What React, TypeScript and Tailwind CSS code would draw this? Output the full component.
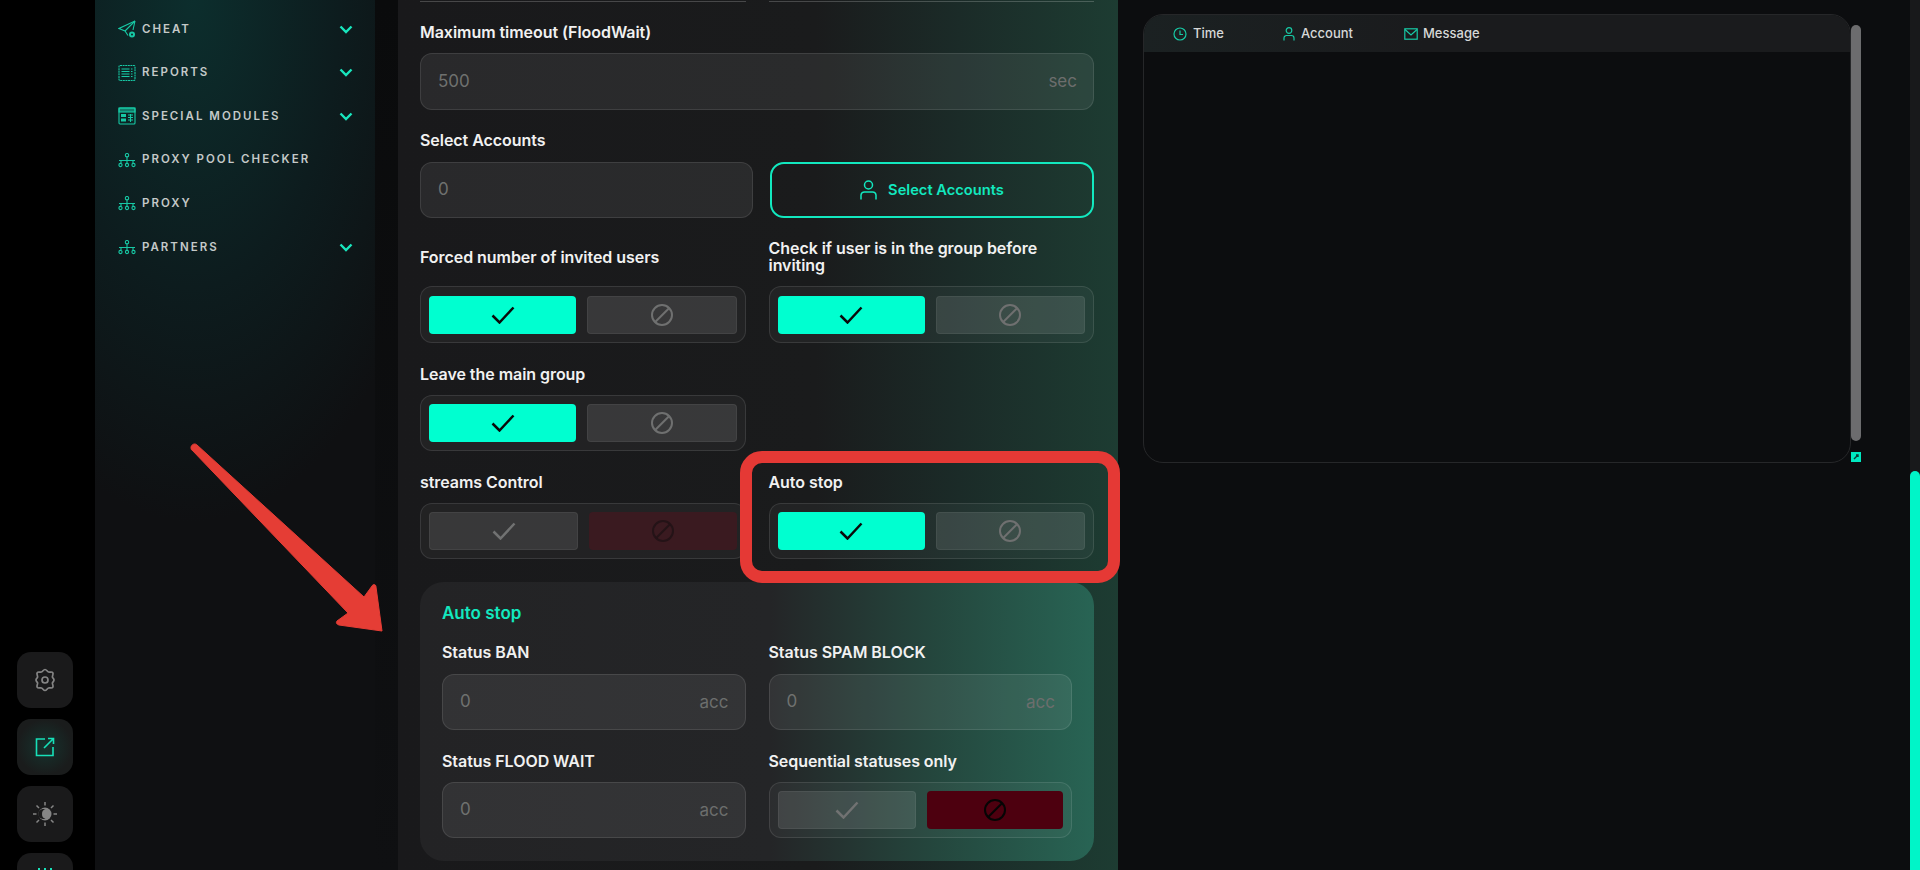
import React from 'react';

const font = { fontFamily: 'Inter, "Liberation Sans", sans-serif' };

function Ban({ color }: { color: string }) {
  return (
    <svg width="24" height="24" viewBox="0 0 24 24" fill="none" stroke={color} strokeWidth="2">
      <circle cx="12" cy="12" r="10" />
      <path d="M5.2 19 19 5.2" />
    </svg>
  );
}

function Check({ color }: { color: string }) {
  return (
    <svg width="24" height="18" viewBox="0 0 24 18" fill="none" stroke={color} strokeWidth="2.5">
      <path d="M1.5 9.5 8.5 16.5 22.5 1.5" />
    </svg>
  );
}

function Chevron() {
  return (
    <svg width="14" height="9" viewBox="0 0 14 9" fill="none" stroke="#19e6bd" strokeWidth="2.4" className="ml-auto">
      <path d="M1.5 1.5 7 7l5.5-5.5" />
    </svg>
  );
}

function NetworkIcon() {
  return (
    <svg width="18" height="15" viewBox="0 0 18 15" fill="none" stroke="#17c9a5" strokeWidth="1.1">
      <circle cx="9" cy="2.2" r="1.7" />
      <path d="M9 4v3M1 7.5h16M3 7.5v2.5M9 7.5v2.5M15 7.5v2.5" />
      <circle cx="2.5" cy="12" r="1.6" />
      <circle cx="9" cy="12" r="1.6" />
      <circle cx="15.5" cy="12" r="1.6" />
    </svg>
  );
}

function PlaneIcon() {
  return (
    <svg width="18" height="18" viewBox="0 0 18 18" fill="none" stroke="#17c9a5" strokeWidth="1.1">
      <path d="M17 1 1 8.5l6 2.5 3 4.5" />
      <path d="M17 1 7 11M17 1l-2 9" />
      <circle cx="14" cy="14.5" r="3" fill="#17c9a5" stroke="none" />
      <circle cx="14" cy="14.5" r="1" fill="#0d2424" stroke="none" />
    </svg>
  );
}

function ReportIcon() {
  return (
    <svg width="18" height="18" viewBox="0 0 18 18" fill="none" stroke="#17c9a5" strokeWidth="1.1">
      <rect x="1" y="1.5" width="16" height="15" rx="1" strokeDasharray="2 0.6" />
      <path d="M3.5 5h8M3.5 7.5h8M3.5 10h8M3.5 12.5h8M13 5h1.5M13 7.5h1.5M13 10h1.5M13 12.5h1.5" />
    </svg>
  );
}

function ModuleIcon() {
  return (
    <svg width="18" height="18" viewBox="0 0 18 18" fill="none" stroke="#17c9a5" strokeWidth="1.1">
      <rect x="1" y="1" width="16" height="16" rx="1" />
      <rect x="1" y="1" width="16" height="4" fill="#17c9a5" fillOpacity="0.55" />
      <rect x="3" y="7" width="5" height="3" fill="#17c9a5" stroke="none" />
      <rect x="3" y="11.5" width="5" height="3" fill="#17c9a5" stroke="none" />
      <path d="M10 8h5M10 10.5h5M10 13h5M12.5 7v8" />
    </svg>
  );
}

function NavItem({ icon, label, arrow }: { icon: React.ReactNode; label: string; arrow?: boolean }) {
  return (
    <div className="flex h-[43.6px] items-center">
      <div className="flex w-[24px] justify-start">{icon}</div>
      <span className="text-[11.5px] font-semibold tracking-[2px] text-[#c4c9c8]">{label}</span>
      {arrow && <Chevron />}
    </div>
  );
}

function RailButton({ children, glow }: { children: React.ReactNode; glow?: boolean }) {
  return (
    <div
      className={
        glow
          ? 'flex h-[56px] w-[56px] shrink-0 items-center justify-center rounded-[14px] bg-[radial-gradient(circle,#16332e_0%,#1a1c1c_70%)]'
          : 'flex h-[56px] w-[56px] shrink-0 items-center justify-center rounded-[14px] bg-[#1a1a1b]'
      }
    >
      {children}
    </div>
  );
}

function Label({ children }: { children: React.ReactNode }) {
  return <div className="h-5 text-[16px] leading-5 font-semibold tracking-[-0.05px] text-[#f1f1f1]">{children}</div>;
}

function Input({ value, unit }: { value: string; unit?: string }) {
  return (
    <div className="flex h-[56px] items-center justify-between rounded-[12px] border border-white/10 bg-white/[0.07] pr-[16px] pl-[17px]">
      <span className="text-[17px] text-[#6f716f]">{value}</span>
      {unit && <span className="mt-0.5 text-[17px] text-[#6c6e6d]">{unit}</span>}
    </div>
  );
}

function Toggle({ mode, tall }: { mode: 'on' | 'locked' | 'blocked'; tall?: boolean }) {
  return (
    <div
      className={
        tall
          ? 'flex h-[57px] items-center gap-[11px] rounded-[12px] border border-white/10 bg-white/[0.04] px-[8px] pt-[1px]'
          : 'flex h-[56px] items-center gap-[11px] rounded-[12px] border border-white/10 bg-white/[0.04] px-[8px]'
      }
    >
      {mode === 'on' ? (
        <div className="flex h-[38px] flex-1 items-center justify-center rounded-[4px] bg-[#00ffd0]">
          <Check color="#0a0a0a" />
        </div>
      ) : (
        <div className="flex h-[38px] flex-1 items-center justify-center rounded-[4px] border border-white/[0.06] bg-white/[0.1]">
          <Check color="#717272" />
        </div>
      )}
      {mode === 'on' && (
        <div className="flex h-[38px] flex-1 items-center justify-center rounded-[4px] border border-white/[0.06] bg-white/[0.1]">
          <Ban color="#6f7070" />
        </div>
      )}
      {mode === 'locked' && (
        <div className="flex h-[38px] flex-1 items-center justify-center rounded-[4px] bg-[#3a1a20]">
          <Ban color="#241317" />
        </div>
      )}
      {mode === 'blocked' && (
        <div className="flex h-[38px] flex-1 items-center justify-center rounded-[4px] bg-[#4d000f]">
          <Ban color="#050505" />
        </div>
      )}
    </div>
  );
}

export default function App() {
  return (
    <div style={font} className="relative flex h-[870px] w-[1920px] overflow-hidden bg-[#0c0d0f]">
      {/* icon rail */}
      <div className="flex w-[95px] shrink-0 flex-col gap-[11px] bg-black pt-[652px] pl-[17px]">
        <RailButton>
          <svg width="24" height="24" viewBox="0 0 24 24" fill="none" stroke="#858585" strokeWidth="1.7">
            <path d="M12 1.5c1.6 0 2.1 2 3.6 2.5 1.6.5 3.3-.7 4.2.7.9 1.4-.6 2.8-.4 4.4.2 1 1.6 1.4 1.6 2.9s-1.4 1.9-1.6 2.9c-.2 1.6 1.3 3 .4 4.4-.9 1.4-2.6.2-4.2.7-1.5.5-2 2.5-3.6 2.5s-2.1-2-3.6-2.5c-1.6-.5-3.3.7-4.2-.7-.9-1.4.6-2.8.4-4.4C4.4 13.9 3 13.5 3 12s1.4-1.9 1.6-2.9c.2-1.6-1.3-3-.4-4.4.9-1.4 2.6-.2 4.2-.7C9.9 3.5 10.4 1.5 12 1.5Z" />
            <circle cx="12" cy="12" r="3" />
          </svg>
        </RailButton>
        <RailButton glow>
          <svg width="20" height="20" viewBox="0 0 20 20" fill="none" stroke="#17e0b8" strokeWidth="1.6">
            <path d="M10 2H1.5v16.5H18V10" />
            <path d="M9 11 18 2M13 1.5h5.5V7" />
          </svg>
        </RailButton>
        <RailButton>
          <svg width="26" height="26" viewBox="0 0 26 26" fill="none" stroke="#858585" strokeWidth="1.5">
            <circle cx="13" cy="13" r="6.5" fill="#858585" stroke="none" />
            <path d="M13.5 8.5a5 5 0 1 0 0 9 3.5 4.5 0 0 1 0-9Z" fill="#1a1a1b" stroke="none" />
            <path d="M13 1v3.5M13 21.5V25M1 13h3.5M21.5 13H25M4.5 4.5 7 7M19 19l2.5 2.5M21.5 4.5 19 7M7 19l-2.5 2.5" />
          </svg>
        </RailButton>
        <RailButton>
          <svg width="18" height="18" viewBox="0 0 18 18" stroke="#17e0b8" strokeWidth="2" className="mt-[15px] self-start">
            <path d="M3 0v6M9 0v6M15 0v6" />
          </svg>
        </RailButton>
      </div>

      {/* sidebar */}
      <div className="w-[280px] shrink-0 bg-[radial-gradient(ellipse_95%_60%_at_35%_0%,#0c2e2d_0%,#0d1c1e_55%,#0f1012_100%)] pt-[7.5px] pr-[22px] pl-[23px]">
        <NavItem icon={<PlaneIcon />} label="CHEAT" arrow />
        <NavItem icon={<ReportIcon />} label="REPORTS" arrow />
        <NavItem icon={<ModuleIcon />} label="SPECIAL MODULES" arrow />
        <NavItem icon={<NetworkIcon />} label="PROXY POOL CHECKER" />
        <NavItem icon={<NetworkIcon />} label="PROXY" />
        <NavItem icon={<NetworkIcon />} label="PARTNERS" arrow />
      </div>
      <div className="w-[23px] shrink-0 bg-[linear-gradient(180deg,#0a0b0c_0%,#0f1012_100%)]" />

      {/* form panel */}
      <div className="w-[720px] shrink-0 bg-[linear-gradient(90deg,#19191b_0%,#1a1b1c_58%,#1b2b28_78%,#1d3c32_100%)] pr-[24px] pl-[22px]">
        <div className="grid h-[2px] grid-cols-2 gap-x-[23px]">
          <div className="border-b border-white/20" />
          <div className="border-b border-white/20" />
        </div>

        <div className="mt-[20px]">
          <Label>Maximum timeout (FloodWait)</Label>
        </div>
        <div className="mt-[11px]">
          <div className="flex h-[57px] items-center justify-between rounded-[12px] border border-white/10 bg-white/[0.07] pr-[16px] pl-[17px]">
            <span className="text-[17px] text-[#6f716f]">500</span>
            <span className="text-[17px] text-[#6c6e6d]">sec</span>
          </div>
        </div>

        <div className="mt-[20px]">
          <Label>Select Accounts</Label>
        </div>
        <div className="mt-[12px] flex gap-[17px]">
          <div className="w-[333px]">
            <Input value="0" />
          </div>
          <div className="flex h-[56px] flex-1 items-center justify-center gap-[11px] rounded-[14px] border-2 border-[#12e8bf]">
            <svg width="17" height="20" viewBox="0 0 17 20" fill="none" stroke="#12e8bf" strokeWidth="1.5">
              <circle cx="8.5" cy="5" r="4" />
              <path d="M1 19.5V15a3.5 3.5 0 0 1 3.5-3h8a3.5 3.5 0 0 1 3.5 3v4.5" />
            </svg>
            <span className="text-[14.7px] font-semibold text-[#12e8bf]">Select Accounts</span>
          </div>
        </div>

        <div className="mt-[19px] grid grid-cols-2 gap-x-[23px]">
          <div>
            <div className="flex h-[40px] items-center">
              <Label>Forced number of invited users</Label>
            </div>
            <div className="mt-[9px]">
              <Toggle mode="on" tall />
            </div>
          </div>
          <div>
            <div className="flex h-[40px] items-center text-[16px] leading-[17px] font-semibold tracking-[-0.05px] text-[#f1f1f1]">
              Check if user is in the group before inviting
            </div>
            <div className="mt-[9px]">
              <Toggle mode="on" tall />
            </div>
          </div>
        </div>

        <div className="mt-[21px] grid grid-cols-2 gap-x-[23px]">
          <div>
            <Label>Leave the main group</Label>
            <div className="mt-[11px]">
              <Toggle mode="on" />
            </div>
          </div>
        </div>

        <div className="mt-[21px] grid grid-cols-2 gap-x-[23px]">
          <div>
            <Label>streams Control</Label>
            <div className="mt-[11px]">
              <Toggle mode="locked" />
            </div>
          </div>
          <div>
            <Label>Auto stop</Label>
            <div className="mt-[11px]">
              <Toggle mode="on" />
            </div>
          </div>
        </div>

        <div className="mt-[23px] h-[279px] rounded-[24px] bg-[linear-gradient(90deg,#232325_0%,#242527_52%,#24463d_76%,#286454_100%)] px-[22px] pt-[21px]">
          <div className="h-5 text-[17px] leading-5 font-semibold text-[#12e8bf]">Auto stop</div>
          <div className="mt-[19px] grid grid-cols-2 gap-x-[23px]">
            <div>
              <Label>Status BAN</Label>
              <div className="mt-[12px]">
                <Input value="0" unit="acc" />
              </div>
            </div>
            <div>
              <Label>Status SPAM BLOCK</Label>
              <div className="mt-[12px]">
                <Input value="0" unit="acc" />
              </div>
            </div>
          </div>
          <div className="mt-[21px] grid grid-cols-2 gap-x-[23px]">
            <div>
              <Label>Status FLOOD WAIT</Label>
              <div className="mt-[11px]">
                <Input value="0" unit="acc" />
              </div>
            </div>
            <div>
              <Label>Sequential statuses only</Label>
              <div className="mt-[11px]">
                <Toggle mode="blocked" />
              </div>
            </div>
          </div>
        </div>
      </div>

      {/* log table */}
      <div className="flex flex-1 items-start pt-[14px] pl-[25px]">
        <div className="h-[449px] w-[708px] overflow-hidden rounded-[20px] border border-[#262729]">
          <div className="flex h-[37px] items-center bg-[linear-gradient(90deg,#1b2122_0%,#1a1b1d_40%)] pl-[29px] text-[13px] font-medium text-[#d6d8d7]">
            <div className="flex w-[110px] items-center gap-[6px]">
              <svg width="14" height="14" viewBox="0 0 14 14" fill="none" stroke="#17c9a5" strokeWidth="1.2">
                <circle cx="7" cy="7" r="6" />
                <path d="M7 3.5V7.5H10" />
              </svg>
              Time
            </div>
            <div className="flex w-[121px] items-center gap-[6px]">
              <svg width="12" height="14" viewBox="0 0 12 14" fill="none" stroke="#17c9a5" strokeWidth="1.2">
                <circle cx="6" cy="3.5" r="2.8" />
                <path d="M1 13.5V11a2.5 2.5 0 0 1 2.5-2.5h5A2.5 2.5 0 0 1 11 11v2.5" />
              </svg>
              Account
            </div>
            <div className="flex items-center gap-[5px]">
              <svg width="14" height="12" viewBox="0 0 14 12" fill="none" stroke="#17c9a5" strokeWidth="1.2">
                <rect x="0.8" y="0.8" width="12.4" height="10.4" />
                <path d="M1 1.5 7 7l6-5.5" />
              </svg>
              Message
            </div>
          </div>
        </div>
        <div className="flex h-[448px] w-[10px] flex-col pt-[11px]">
          <div className="h-[416px] rounded-full bg-[#6c6c6e]" />
          <div className="mt-auto flex h-[10px] items-center justify-center bg-[#00e8c0]">
            <svg width="6" height="6" viewBox="0 0 6 6" stroke="#0a3a33" strokeWidth="1.4">
              <path d="M1 5 5 1M3 1h2v2" />
            </svg>
          </div>
        </div>
      </div>

      {/* page scrollbar */}
      <div className="flex w-[10px] shrink-0 flex-col justify-end bg-[#18191b]">
        <div className="h-[399px] rounded-t-full bg-[#00f5c8]" />
      </div>

      {/* red annotations on top of the screenshot */}
      <div className="absolute top-[451px] left-[740px] h-[132px] w-[380px] rounded-[22px] border-[12px] border-[#e53935]" />
      <svg className="absolute top-[420px] left-[170px]" width="240" height="230" viewBox="0 0 240 230" fill="#e53d35">
        <path
          d="M21 27c1-3 4-4 6-2L194 177l8-11c1-2 4-2 4 1l6 44-43-6c-3-1-3-3-2-4l11-8L22 30c-1 0-1-2-1-3Z"
          stroke="#e53d35"
          strokeLinejoin="round"
        />
      </svg>
    </div>
  );
}
